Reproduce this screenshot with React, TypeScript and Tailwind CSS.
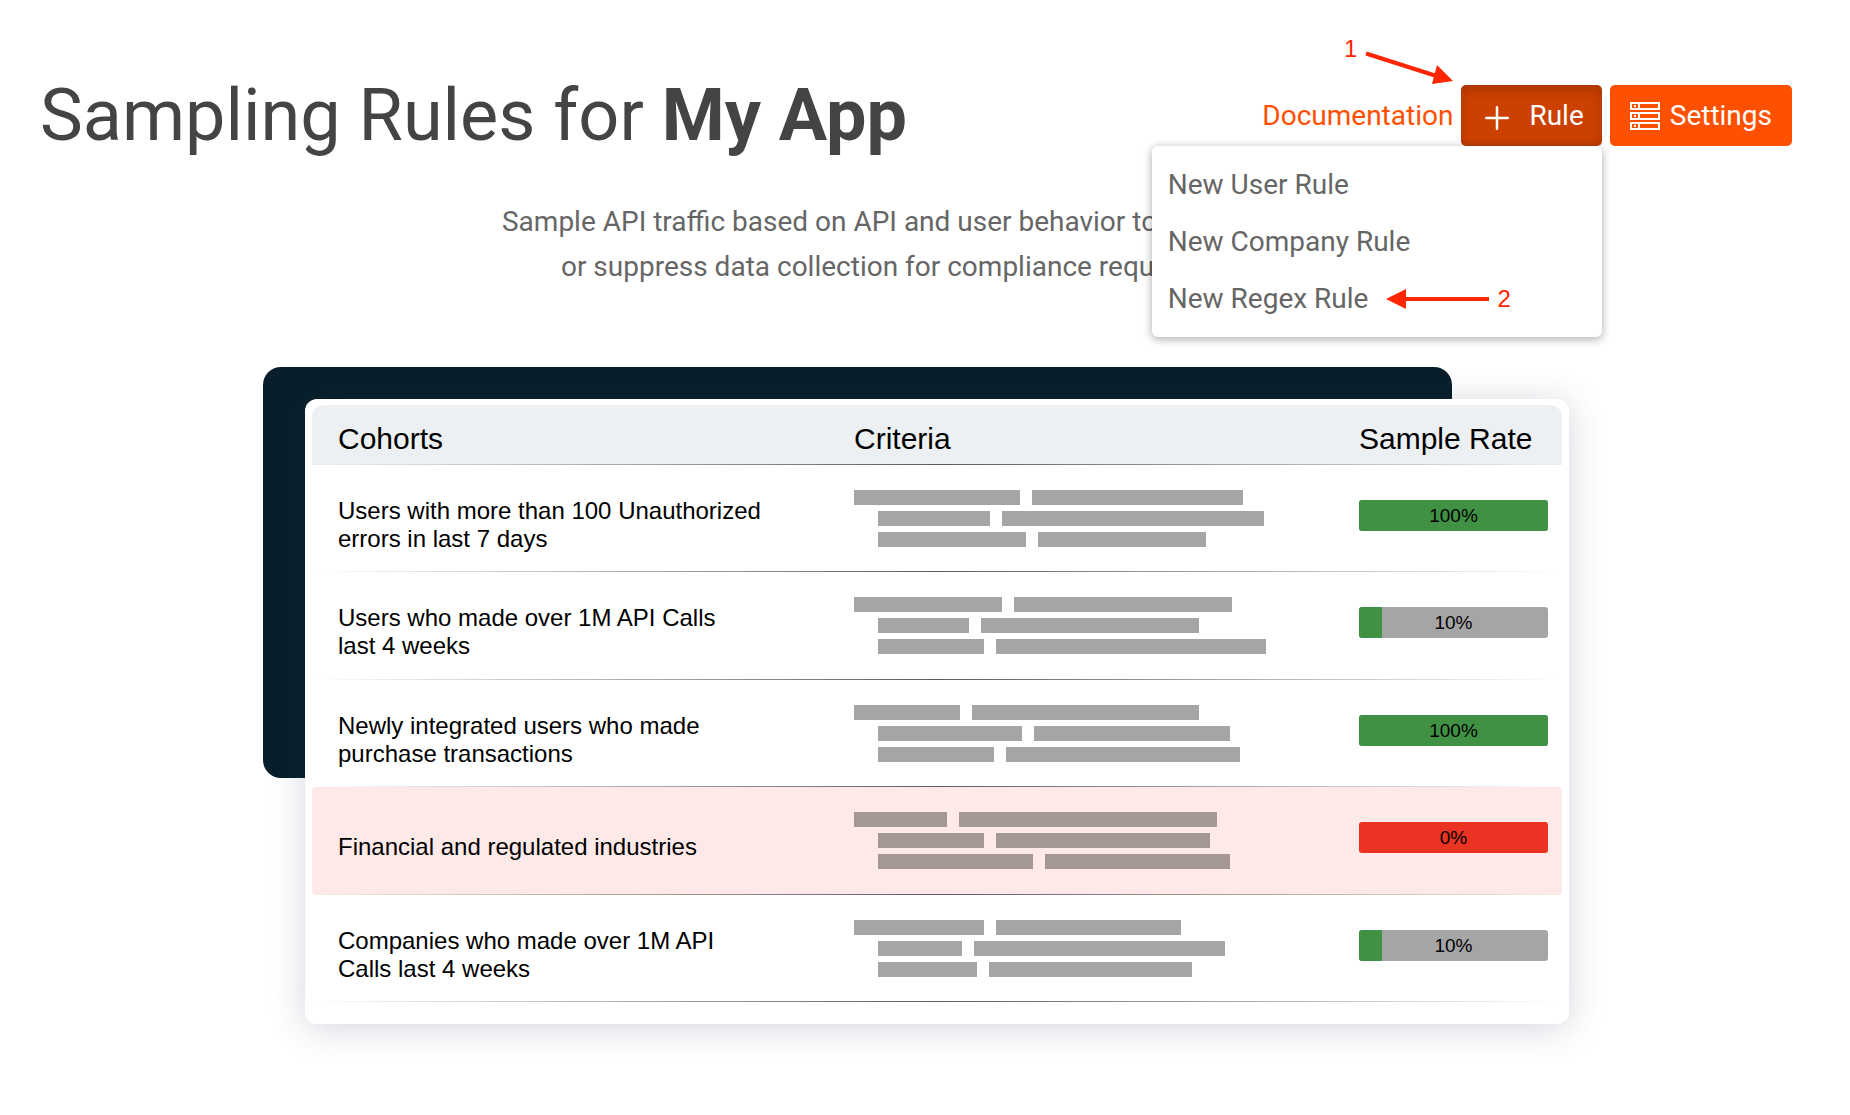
import type { ReactNode } from "react";

const MENU_ITEMS = ["New User Rule", "New Company Rule", "New Regex Rule"];

type BarPair = [number, number];

interface CohortRow {
  cohort: [string, string?];
  criteria: [BarPair, BarPair, BarPair];
  rate: number;
}

const ROWS: CohortRow[] = [
  { cohort: ["Users with more than 100 Unauthorized", "errors in last 7 days"], criteria: [[166, 211], [112, 262], [148, 168]], rate: 100 },
  { cohort: ["Users who made over 1M API Calls", "last 4 weeks"], criteria: [[148, 218], [91, 218], [106, 270]], rate: 10 },
  { cohort: ["Newly integrated users who made", "purchase transactions"], criteria: [[106, 227], [144, 196], [116, 234]], rate: 100 },
  { cohort: ["Financial and regulated industries"], criteria: [[93, 258], [106, 214], [155, 185]], rate: 0 },
  { cohort: ["Companies who made over 1M API", "Calls last 4 weeks"], criteria: [[130, 185], [84, 251], [99, 203]], rate: 10 },
];

export default function App() {
  return (
    <main className="min-h-screen bg-white pr-[58px] pb-[90px] pl-10 font-[Roboto,sans-serif] text-[28px] font-normal text-[#666]">
      <header className="flex items-start justify-between pt-[85px]">
        <h1 className="-mt-[11px] text-[72px] leading-[84px] font-normal whitespace-nowrap text-[#444]">
          Sampling Rules for <strong className="font-bold">My App</strong>
        </h1>
        <div className="flex items-center gap-2">
          <a href="#documentation" className="text-[#ff5000]">Documentation</a>
          <div className="relative">
            <button type="button" aria-haspopup="menu" aria-expanded="true" className="flex h-[61px] items-center rounded-[5px] bg-[#cc4000] pr-[18px] pl-6 text-white shadow-[inset_0_4px_12px_rgba(0,0,0,0.18)]">
              <PlusIcon />
              <span className="ml-5">Rule</span>
            </button>
            <RuleMenu />
            <div className="absolute right-full bottom-full flex items-start text-2xl leading-6 text-[#ff2600]">
              <Callout>1</Callout>
              <svg className="ml-2 h-[48px] w-[96px]" viewBox="0 0 96 48" fill="none" aria-hidden="true">
                <path d="M1 16.500L70 38.500" stroke="currentColor" strokeWidth="4" />
                <path d="M72 28L88 44L67 47Z" fill="currentColor" />
              </svg>
            </div>
          </div>
          <button type="button" className="flex h-[61px] items-center gap-2.5 rounded-[5px] bg-[#ff5000] px-5 text-white">
            <ServerIcon />
            Settings
          </button>
        </div>
      </header>

      <p className="mt-[41px] text-center leading-[45px]">
        Sample API traffic based on API and user behavior to reduce costs,
        <br />
        or suppress data collection for compliance requirements.
      </p>

      <section className="mx-auto mt-[78px] grid max-w-[1306px]">
        <div className="mr-[117px] h-[411px] rounded-[18px] bg-[#081f2b] [grid-area:1/1]" />
        <div className="mt-8 ml-[42px] rounded-xl bg-white px-[7px] pt-1.5 pb-[22px] shadow-[0_4px_36px_rgba(30,50,80,0.2)] [grid-area:1/1]">
          <CohortTable />
        </div>
      </section>
    </main>
  );
}

function RuleMenu() {
  return (
    <div role="menu" className="absolute top-full right-0 z-10 flex w-[450px] flex-col rounded-md bg-white py-2.5 shadow-[0_2px_10px_rgba(0,0,0,0.35)]">
      {MENU_ITEMS.map((item, index) => (
        <button key={item} type="button" role="menuitem" className="flex h-[57px] items-center px-4 text-left">
          {item}
          {index === 2 && (
            <span className="flex items-center text-2xl text-[#ff2600]">
              <svg className="mr-2 ml-[18px] h-5 w-[103px]" viewBox="0 0 103 20" fill="none" aria-hidden="true">
                <path d="M18 10H103" stroke="currentColor" strokeWidth="4" />
                <path d="M0 10L20 0V20Z" fill="currentColor" />
              </svg>
              <Callout>2</Callout>
            </span>
          )}
        </button>
      ))}
    </div>
  );
}

function CohortTable() {
  return (
    <table className="w-full table-fixed border-separate border-spacing-0 text-left font-['Liberation_Sans',sans-serif] text-2xl leading-7 text-black">
      <colgroup>
        <col />
        <col className="w-[505px]" />
        <col className="w-[203px]" />
      </colgroup>
      <thead>
        <tr className="relative h-[60px] text-[30px]">
          <th scope="col" className="rounded-tl-xl bg-[#edf0f3] pt-2 pl-[26px] font-normal">Cohorts</th>
          <th scope="col" className="bg-[#edf0f3] pt-2 font-normal">Criteria</th>
          <th scope="col" className="rounded-tr-xl bg-[#edf0f3] pt-2 font-normal">
            Sample Rate
            <RowLine />
          </th>
        </tr>
      </thead>
      <tbody>
        {ROWS.map((row) => {
          const fill = row.rate === 0 ? "bg-[#fde9e8]" : "";
          return (
            <tr key={row.cohort[0]} className="relative h-[107px] even:h-[108px]">
              <td className={`rounded-l pt-3 pl-[26px] ${fill}`}>
                {row.cohort[0]}
                {row.cohort[1] && <><br />{row.cohort[1]}</>}
              </td>
              <td className={`pt-[25px] align-top ${fill}`}>
                <Criteria lines={row.criteria} tone={row.rate === 0 ? "bg-[#a49794]" : "bg-[#a5a5a5]"} />
              </td>
              <td className={`rounded-r pt-[35px] pr-3.5 align-top ${fill}`}>
                <RateBar rate={row.rate} />
                <RowLine />
              </td>
            </tr>
          );
        })}
      </tbody>
    </table>
  );
}

// Hairline across the whole row, faded out at both ends
function RowLine() {
  return <span className="absolute inset-x-0 bottom-0 h-px bg-linear-to-r from-transparent via-[#5c5c5c] to-transparent" />;
}

function Criteria({ lines, tone }: { lines: BarPair[]; tone: string }) {
  return (
    <div className="flex flex-col gap-1.5">
      {lines.map((line, index) => (
        <div key={index} className={`flex gap-3 ${index > 0 ? "pl-6" : ""}`}>
          {line.map((width) => <span key={width} className={`h-[15px] ${tone}`} style={{ width }} />)}
        </div>
      ))}
    </div>
  );
}

function RateBar({ rate }: { rate: number }) {
  return (
    <div className={`relative h-[31px] overflow-hidden rounded-[3px] text-center text-[19px] leading-[31px] ${rate === 0 ? "bg-[#ea3323]" : "bg-[#a5a5a5]"}`}>
      <div className="absolute inset-y-0 left-0 bg-[#419145]" style={{ width: rate === 10 ? "12%" : `${rate}%` }} />
      <span className="relative">{rate}%</span>
    </div>
  );
}

function Callout({ children }: { children: ReactNode }) {
  return <span className="font-['Liberation_Sans',sans-serif]">{children}</span>;
}

function PlusIcon() {
  return (
    <svg className="mt-1 size-6" viewBox="0 0 24 24" fill="none" stroke="currentColor" strokeWidth="2.500" strokeLinecap="round" aria-hidden="true">
      <path d="M12 1.250V22.750M1.250 12H22.750" />
    </svg>
  );
}

function ServerIcon() {
  return (
    <svg className="h-7 w-[30px]" viewBox="0 0 30 28" fill="none" stroke="currentColor" strokeWidth="2" aria-hidden="true">
      {[0, 10, 20].map((y) => (
        <g key={y}>
          <rect x="1" y={y + 1} width="28" height="6" />
          <path d={`M9 ${y + 1}v6`} />
          <rect x="4" y={y + 3} width="2" height="2" fill="currentColor" stroke="none" />
        </g>
      ))}
    </svg>
  );
}
